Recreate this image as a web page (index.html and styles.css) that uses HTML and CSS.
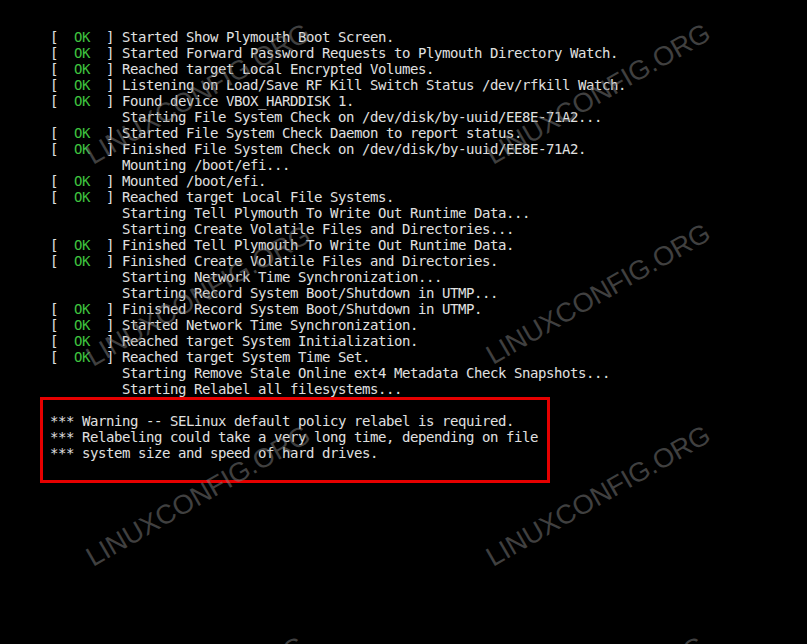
FILE: index.html
```html
<!DOCTYPE html>
<html>
<head>
    <title>Boot Console</title>
    <link rel="stylesheet" href="styles.css">
</head>
<body>
    <div class="console">
        <div class="line">[  <span class="ok">OK</span>  ] Started Show Plymouth Boot Screen.</div>
        <div class="line">[  <span class="ok">OK</span>  ] Started Forward Password Requests to Plymouth Directory Watch.</div>
        <div class="line">[  <span class="ok">OK</span>  ] Reached target Local Encrypted Volumes.</div>
        <div class="line">[  <span class="ok">OK</span>  ] Listening on Load/Save RF Kill Switch Status /dev/rfkill Watch.</div>
        <div class="line">[  <span class="ok">OK</span>  ] Found device VBOX_HARDDISK 1.</div>
        <div class="line">         Starting File System Check on /dev/disk/by-uuid/EE8E-71A2...</div>
        <div class="line">[  <span class="ok">OK</span>  ] Started File System Check Daemon to report status.</div>
        <div class="line">[  <span class="ok">OK</span>  ] Finished File System Check on /dev/disk/by-uuid/EE8E-71A2.</div>
        <div class="line">         Mounting /boot/efi...</div>
        <div class="line">[  <span class="ok">OK</span>  ] Mounted /boot/efi.</div>
        <div class="line">[  <span class="ok">OK</span>  ] Reached target Local File Systems.</div>
        <div class="line">         Starting Tell Plymouth To Write Out Runtime Data...</div>
        <div class="line">         Starting Create Volatile Files and Directories...</div>
        <div class="line">[  <span class="ok">OK</span>  ] Finished Tell Plymouth To Write Out Runtime Data.</div>
        <div class="line">[  <span class="ok">OK</span>  ] Finished Create Volatile Files and Directories.</div>
        <div class="line">         Starting Network Time Synchronization...</div>
        <div class="line">         Starting Record System Boot/Shutdown in UTMP...</div>
        <div class="line">[  <span class="ok">OK</span>  ] Finished Record System Boot/Shutdown in UTMP.</div>
        <div class="line">[  <span class="ok">OK</span>  ] Started Network Time Synchronization.</div>
        <div class="line">[  <span class="ok">OK</span>  ] Reached target System Initialization.</div>
        <div class="line">[  <span class="ok">OK</span>  ] Reached target System Time Set.</div>
        <div class="line">         Starting Remove Stale Online ext4 Metadata Check Snapshots...</div>
        <div class="line">         Starting Relabel all filesystems...</div>

        <!-- highlighted warning -->
        <div class="warning">
            <div class="line">*** Warning -- SELinux default policy relabel is required.</div>
            <div class="line">*** Relabeling could take a very long time, depending on file</div>
            <div class="line">*** system size and speed of hard drives.</div>
        </div>
    </div>

    <svg class="watermarks" width="807" height="644">
        <text x="93" y="165" transform="rotate(-30 93 165)">LINUXCONFIG.ORG</text>
        <text x="493" y="165" transform="rotate(-30 493 165)">LINUXCONFIG.ORG</text>
        <text x="93" y="367" transform="rotate(-30 93 367)">LINUXCONFIG.ORG</text>
        <text x="493" y="365" transform="rotate(-30 493 365)">LINUXCONFIG.ORG</text>
        <text x="93" y="567" transform="rotate(-30 93 567)">LINUXCONFIG.ORG</text>
        <text x="493" y="567" transform="rotate(-30 493 567)">LINUXCONFIG.ORG</text>
        <text x="88" y="778" transform="rotate(-30 88 778)">LINUXCONFIG.ORG</text>
        <text x="488" y="778" transform="rotate(-30 488 778)">LINUXCONFIG.ORG</text>
    </svg>
</body>
</html>
```

FILE: styles.css
```css
html, body {
    margin: 0;
    height: 100%;
    background-color: #000;
    overflow: hidden;
}
body {
    position: relative;
}
.console {
    padding: 29px 0 0 50px;
    font-family: "DejaVu Sans Mono", monospace;
    font-size: 14px;
    letter-spacing: -0.43px;
    color: #e0e0e0;
}
.line {
    height: 16px;
    line-height: 16px;
    white-space: pre;
}
.ok {
    color: #3fc43f;
}
.warning {
    box-sizing: border-box;
    width: 510px;
    margin-left: -10px;
    padding: 13px 0 19px 7px;
    border: 3px solid #e60000;
}
.watermarks {
    position: absolute;
    left: 0;
    top: 0;
    pointer-events: none;
}
.watermarks text {
    font-family: "Liberation Sans", Arial, sans-serif;
    font-size: 27px;
    fill: #808080;
    fill-opacity: 0.5;
}
```
